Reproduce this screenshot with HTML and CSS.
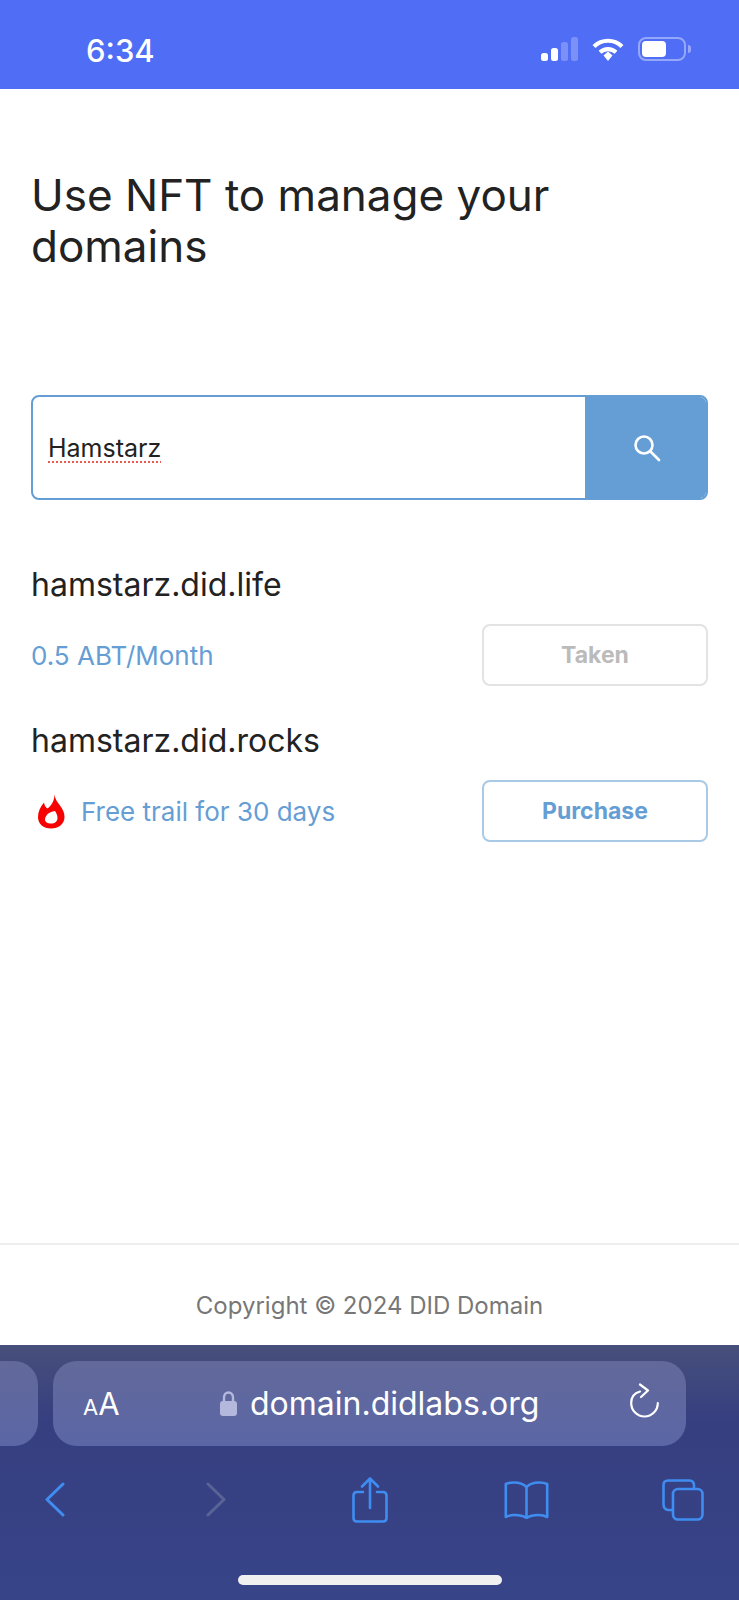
FILE: index.html

```html
<!DOCTYPE html>
<html lang="en">
<head>
    <meta charset="UTF-8">
    <meta name="viewport" content="width=device-width, initial-scale=1.0">
    <title>DID Domain</title>
    <link rel="stylesheet" href="styles.css">
</head>
<body>
    <div class="status-bar">
        <span class="clock">6:34</span>
        <svg class="signal" width="37" height="24" viewBox="0 0 37 24">
            <rect x="0" y="16" width="7" height="8" rx="2.5" fill="#fff"/>
            <rect x="10" y="11" width="7" height="13" rx="2.5" fill="#fff"/>
            <rect x="20" y="5" width="7" height="19" rx="2.5" fill="#fff" fill-opacity=".25"/>
            <rect x="30" y="0" width="7" height="24" rx="2.5" fill="#fff" fill-opacity=".25"/>
        </svg>
        <svg class="wifi" width="32" height="24" viewBox="0 0 32 24" fill="none" stroke="#fff" stroke-width="4.2">
            <path d="M2 9.5C9.8 1.8 22.2 1.8 30 9.5"/>
            <path d="M8 15.3C12.5 11 19.5 11 24 15.3"/>
            <path d="M11.5 18.5L16 14.5L20.500 18.500L16 24Z" fill="#fff" stroke="none"/>
        </svg>
        <div class="battery"><div class="battery-fill"></div></div>
        <div class="battery-nub"></div>
    </div>

    <main class="page">
        <h1>Use NFT to manage your domains</h1>

        <div class="search">
            <div class="search-input"><span class="misspelled">Hamstarz</span></div>
            <button class="search-btn">
                <svg width="32" height="32" viewBox="0 0 32 32" fill="none" stroke="#fff" stroke-width="2.600" stroke-linecap="round">
                    <circle cx="13" cy="13" r="8.500"/>
                    <path d="M19.500 19.500L28 28"/>
                </svg>
            </button>
        </div>

        <div class="result">
            <div class="result-name">hamstarz.did.life</div>
            <div class="result-row">
                <span class="price">0.5 ABT/Month</span>
                <button class="action action-taken">Taken</button>
            </div>
        </div>

        <div class="result">
            <div class="result-name">hamstarz.did.rocks</div>
            <div class="result-row">
                <span class="price price-free">
                    <svg class="flame" width="28" height="35" viewBox="0 0 28 35">
                        <path fill="#f60000" fill-rule="evenodd" d="M17.500 0.500C18 5 20 7.500 23 11.500C26 15.500 27.500 19 27.500 23C27.500 30 21.500 34.500 14 34.500C6.500 34.500 1 30 1 23C1 17.500 3.500 12.500 7 8.500C7.500 11.500 8.500 13.500 10.500 14.500C14 12 17.500 7 17.500 0.500ZM15.500 17.500C11.500 18.500 8 22 8 25.500C8 28 10.500 29.500 14 29.500C18 29.500 20.500 27.500 20.500 24C20.500 21 19 18.500 18 17C17.500 17.200 16.500 17.300 15.500 17.500Z"/>
                    </svg>
                    Free trail for 30 days
                </span>
                <button class="action action-buy">Purchase</button>
            </div>
        </div>
    </main>

    <footer class="footer">Copyright © 2024 DID Domain</footer>

    <div class="browser">
        <div class="address-row">
            <div class="prev-tab"></div>
            <div class="url-pill">
                <span class="text-size"><small>A</small>A</span>
                <div class="url">
                    <svg width="17" height="25" viewBox="0 0 17 25" fill="none">
                        <path d="M4 11V6.500C4 3.500 6 1.500 8.500 1.500C11 1.500 13 3.500 13 6.500V11" stroke="#b4b8dc" stroke-width="2.400"/>
                        <rect x="0" y="10" width="17" height="15" rx="3" fill="#b4b8dc"/>
                    </svg>
                    <span>domain.didlabs.org</span>
                </div>
                <svg class="reload" width="29" height="35" viewBox="0 0 29 35" fill="none" stroke="#fff" stroke-width="2.200" stroke-linecap="round" stroke-linejoin="round">
                    <path d="M10 8.500C4.500 10 1.200 14.500 1.200 20C1.200 27.500 7 33.500 14.500 33.500C22 33.500 27.800 27.500 27.800 20"/>
                    <path d="M10 1.500L18 7.500L11 14"/>
                </svg>
            </div>
        </div>

        <div class="tools">
            <svg class="tool-back" width="20" height="35" viewBox="0 0 20 35" fill="none" stroke="#3f8df0" stroke-width="3" stroke-linecap="round" stroke-linejoin="round">
                <path d="M18 2L2 17.500L18 33"/>
            </svg>
            <svg class="tool-forward" width="20" height="35" viewBox="0 0 20 35" fill="none" stroke="#5a6396" stroke-width="3" stroke-linecap="round" stroke-linejoin="round">
                <path d="M2 2L18 17.500L2 33"/>
            </svg>
            <svg class="tool-share" width="36" height="46" viewBox="0 0 36 46" fill="none" stroke="#3f8df0" stroke-width="2.600" stroke-linecap="round" stroke-linejoin="round">
                <path d="M11 15H5C2.800 15 1.500 16.300 1.500 18.500V41C1.500 43.200 2.800 44.500 5 44.500H31C33.200 44.500 34.500 43.200 34.500 41V18.500C34.500 16.300 33.200 15 31 15H25"/>
                <path d="M18 31V2M10 9.500L18 1.500L26 9.500"/>
            </svg>
            <svg class="tool-book" width="45" height="38" viewBox="0 0 45 38" fill="none" stroke="#3f8df0" stroke-width="2.600" stroke-linecap="round" stroke-linejoin="round">
                <path d="M22.500 6C19 2.500 15 1.500 10 1.500C6.500 1.500 4 2 1.800 3V36C4 34.800 7 34 10.500 34C15 34 19.500 35 22.500 37C25.500 35 30 34 34.500 34C38 34 41 34.800 43.200 36V3C41 2 38.500 1.500 35 1.500C30 1.500 26 2.500 22.500 6Z"/>
                <path d="M22.500 6V36"/>
            </svg>
            <svg class="tool-tabs" width="42" height="42" viewBox="0 0 42 42" fill="none" stroke="#3f8df0" stroke-width="2.600" stroke-linejoin="round">
                <path d="M32 10V6.500C32 3.200 30.500 1.500 27.500 1.500H6C3 1.500 1.500 3 1.500 6V25C1.500 29 3 30.500 6 31H10"/>
                <rect x="11" y="10" width="29.500" height="30.500" rx="5"/>
            </svg>
        </div>

        <div class="home-row"><div class="home-bar"></div></div>
    </div>
</body>
</html>
```

FILE: styles.css

```css
* {
    box-sizing: border-box;
}

body {
    font-family: Inter, "Noto Sans", sans-serif;
    margin: 0;
    padding: 0;
    height: 1600px;
    display: flex;
    flex-direction: column;
    background-color: #fff;
    overflow: hidden;
}

/* phone status bar */
.status-bar {
    height: 89px;
    flex: none;
    background-color: #4f6df5;
    display: flex;
    align-items: center;
    padding: 11px 0 0 86px;
    color: #fff;
}

.clock {
    font-size: 31px;
    font-weight: 500;
    line-height: 1;
    width: 455px;
}

.signal {
    margin-top: -2px;
}

.wifi {
    margin: -2px 0 0 14px;
}

.battery {
    width: 48px;
    height: 24px;
    margin: -2px 0 0 14px;
    padding: 2px;
    border: 2px solid rgba(255, 255, 255, 0.4);
    border-radius: 8px;
}

.battery-fill {
    width: 24px;
    height: 100%;
    background-color: #fff;
    border-radius: 4px;
}

.battery-nub {
    width: 3px;
    height: 8px;
    margin: -2px 0 0 2px;
    background-color: rgba(255, 255, 255, 0.4);
    border-radius: 0 3px 3px 0;
}

/* main page */
.page {
    flex: 1;
    padding: 0 31px;
}

h1 {
    font-size: 44px;
    font-weight: 400;
    line-height: 51px;
    color: #222;
    margin: 81px 0 0;
}

.search {
    display: flex;
    height: 105px;
    margin-top: 123px;
    border: 2px solid #659ed4;
    border-radius: 8px;
    overflow: hidden;
}

.search-input {
    flex: 1;
    display: flex;
    align-items: center;
    padding-left: 15px;
    font-size: 25px;
    color: #222;
}

.misspelled {
    text-decoration: underline dotted #ea5a50 2px;
    text-underline-offset: 5px;
}

.search-btn {
    width: 121px;
    border: none;
    padding: 0 0 0 2px;
    background-color: #659ed4;
    display: flex;
    align-items: center;
    justify-content: center;
}

.result-name {
    font-size: 32px;
    line-height: 40px;
    color: #222;
}

.result {
    margin-top: 65px;
}

.result + .result {
    margin-top: 35px;
}

.result-row {
    display: flex;
    align-items: center;
    justify-content: space-between;
    margin-top: 19px;
}

.price {
    font-size: 26px;
    color: #659ed4;
    display: flex;
    align-items: center;
}

.flame {
    margin: 0 16px 0 6px;
}

.action {
    width: 226px;
    height: 62px;
    background-color: #fff;
    border-radius: 8px;
    font-family: Inter, "Noto Sans", sans-serif;
    font-size: 23px;
    font-weight: 700;
}

.action-taken {
    border: 2px solid #e3e3e3;
    color: #bbb;
}

.action-buy {
    border: 2px solid #a9cae6;
    color: #659ed4;
}

.footer {
    flex: none;
    height: 102px;
    border-top: 2px solid #eee;
    padding-top: 45px;
    text-align: center;
    font-size: 24px;
    line-height: 32px;
    color: #777;
}

/* safari toolbar */
.browser {
    flex: none;
    height: 255px;
    background: linear-gradient(180deg, #474f7b 0%, #363f80 30%, #374488 100%);
}

.address-row {
    display: flex;
    gap: 15px;
    padding-top: 16px;
}

.prev-tab {
    width: 38px;
    height: 85px;
    border-radius: 0 24px 24px 0;
    background: linear-gradient(180deg, #62699a, #5b66a6);
}

.url-pill {
    width: 633px;
    height: 85px;
    border-radius: 24px;
    background: linear-gradient(180deg, #62699a, #5b66a6);
    display: flex;
    align-items: center;
    color: #fff;
    padding-left: 30px;
}

.text-size {
    font-size: 31px;
    width: 137px;
}

.text-size small {
    font-size: 22px;
}

.url {
    display: flex;
    align-items: center;
    gap: 13px;
    font-size: 32px;
    width: 410px;
}

.reload {
    margin-top: -6px;
}

.tools {
    display: flex;
    align-items: center;
    height: 61px;
    margin-top: 23px;
}

.tool-back {
    margin-left: 45px;
}

.tool-forward {
    margin-left: 141px;
}

.tool-share {
    margin-left: 126px;
}

.tool-book {
    margin-left: 116px;
}

.tool-tabs {
    margin-left: 113px;
}

.home-row {
    display: flex;
    justify-content: center;
    padding-top: 45px;
}

.home-bar {
    width: 264px;
    height: 10px;
    border-radius: 5px;
    background-color: #f0f0f0;
}
```
